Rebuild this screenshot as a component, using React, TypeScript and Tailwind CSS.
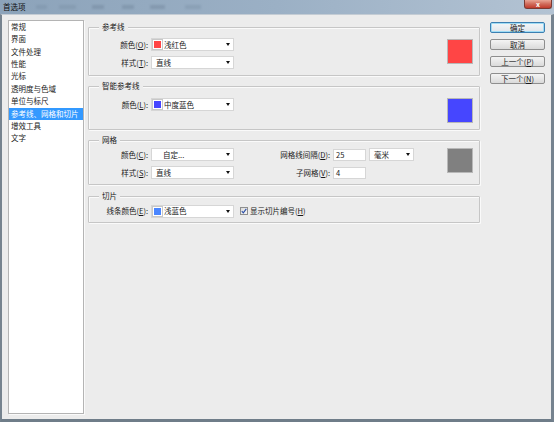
import React from "react";

const U = ({ children }: { children: React.ReactNode }) => (
  <span className="underline underline-offset-[1px] decoration-[0.5px]">{children}</span>
);

const Arrow = () => (
  <span className="ml-auto mr-[3px] w-0 h-0 border-l-[2.5px] border-r-[2.5px] border-t-[3px] border-l-transparent border-r-transparent border-t-[#111]" />
);

function Select({ swatch, text, w = "w-[83px]", indent }: { swatch?: string; text: string; w?: string; indent?: boolean }) {
  return (
    <div className={`${w} h-[13px] bg-white border border-[#d6d6d6] flex items-center`}>
      {swatch ? (
        <>
          <span className={`ml-[1px] w-[9px] h-[9px] border border-[#ffffff] outline outline-[0.5px] outline-[#c8c8c8] ${swatch}`} />
          <span className="ml-[2px]">{text}</span>
        </>
      ) : (
        <span className={indent ? "ml-[11px]" : "ml-[4px]"}>{text}</span>
      )}
      <Arrow />
    </div>
  );
}

function Input({ value }: { value: string }) {
  return (
    <div className="w-[33px] h-[12px] bg-white border border-[#d6d6d6] flex items-center pl-[2px]">{value}</div>
  );
}

function Label({ children, w = "w-[62px]" }: { children: React.ReactNode; w?: string }) {
  return <div className={`${w} text-right pr-[3px] whitespace-nowrap`}>{children}</div>;
}

function Group({ title, h, mt, children }: { title: string; h: string; mt: string; children: React.ReactNode }) {
  return (
    <div className={`relative ${h} ${mt} border border-[#c6c6c6] rounded-[1px] shadow-[inset_1px_1px_0_#fafafa,1px_1px_0_#fafafa]`}>
      <span className="absolute -top-[6px] left-[10px] px-[3px] bg-[#ececec] leading-[10px]">{title}</span>
      {children}
    </div>
  );
}

function Swatch({ color, mt }: { color: string; mt: string }) {
  return <div className={`ml-auto mr-[6px] ${mt} w-[26px] h-[25px] border border-[#b8b8b8] ${color}`} />;
}

function Btn({ children, primary }: { children: React.ReactNode; primary?: boolean }) {
  return (
    <div
      className={`w-[55px] h-[11px] rounded-[2px] flex items-center justify-center leading-[10px] border bg-gradient-to-b ${
        primary
          ? "border-[#3c7fb1] from-[#f4f6f8] to-[#dfe5ea] shadow-[inset_0_0_0_1px_#9fdcf5]"
          : "border-[#8e8e8e] from-[#f4f4f4] to-[#dadada]"
      }`}
    >
      {children}
    </div>
  );
}

const items = ["常规", "界面", "文件处理", "性能", "光标", "透明度与色域", "单位与标尺", "参考线、网格和切片", "增效工具", "文字"];

export default function App() {
  return (
    <div className="w-[554px] h-[422px] flex flex-col overflow-hidden bg-[#ececec] text-[7.5px] text-[#1a1a1a] font-['Noto_Sans_CJK_SC',sans-serif]">
      {/* title bar */}
      <div className="h-[14px] flex items-center bg-gradient-to-r from-[#8ca3ba] via-[#9bb0c5] to-[#b3c3d3] relative">
        <span className="ml-[3px] text-[#0e0e0e]">首选项</span>
        <div className="flex items-center gap-[12px] ml-[10px] opacity-30 blur-[1.2px]">
          <span className="w-[11px] h-[4px] bg-[#6f859b]" />
          <span className="w-[17px] h-[4px] bg-[#6f859b]" />
          <span className="ml-[4px] w-[12px] h-[4px] bg-[#5f7388]" />
          <span className="ml-[6px] w-[12px] h-[4px] bg-[#5f7388]" />
          <span className="ml-[4px] w-[15px] h-[4px] bg-[#5f7388]" />
          <span className="ml-[8px] w-[16px] h-[4px] bg-[#6f859b]" />
        </div>
        <div className="absolute right-[2px] top-0 w-[28px] h-[9px] rounded-b-[3px] border border-t-0 border-[#7a3a33] bg-gradient-to-b from-[#e8a595] via-[#d06a5a] to-[#c0392b] flex items-center justify-center text-white text-[7px] leading-none font-bold">
          x
        </div>
      </div>

      {/* body */}
      <div className="flex-1 flex items-start border-l-2 border-r-[3px] border-b-[3px] border-t border-l-[#76838f] border-r-[#76838f] border-b-[#6f7d89] border-t-[#c4ccd4] pl-[6px] pt-[5px]">
        {/* category list */}
        <div className="w-[76px] h-[394px] bg-white border border-[#b4b4b4] shadow-[1px_1px_0_#fafafa]">
          {items.map((t, i) => (
            <div
              key={t}
              className={`h-[12.37px] leading-[12.37px] pl-[2px] whitespace-nowrap ${i === 7 ? "bg-[#3399ff] text-white" : ""}`}
            >
              {t}
            </div>
          ))}
        </div>

        {/* panels */}
        <div className="ml-[4px] mt-[7px] w-[392px] flex flex-col">
          <Group title="参考线" h="h-[49px]" mt="mt-0">
            <div className="flex">
              <div className="flex flex-col gap-[5px] pt-[10px]">
                <div className="flex items-center h-[13px]">
                  <Label>颜色(<U>O</U>):</Label>
                  <Select swatch="bg-[#ff4545]" text="浅红色" />
                </div>
                <div className="flex items-center h-[13px]">
                  <Label>样式(<U>T</U>):</Label>
                  <Select text="直线" />
                </div>
              </div>
              <Swatch color="bg-[#ff4545]" mt="mt-[11px]" />
            </div>
          </Group>

          <Group title="智能参考线" h="h-[44px]" mt="mt-[10px]">
            <div className="flex">
              <div className="flex items-center h-[13px] mt-[11px]">
                <Label>颜色(<U>L</U>):</Label>
                <Select swatch="bg-[#4646ff]" text="中度蓝色" />
              </div>
              <Swatch color="bg-[#4646ff]" mt="mt-[11px]" />
            </div>
          </Group>

          <Group title="网格" h="h-[45px]" mt="mt-[10px]">
            <div className="flex">
              <div className="flex flex-col gap-[5px] pt-[7px]">
                <div className="flex items-center h-[13px]">
                  <Label>颜色(<U>C</U>):</Label>
                  <Select text="自定..." indent />
                  <Label w="w-[99px]">网格线间隔(<U>D</U>):</Label>
                  <Input value="25" />
                  <div className="ml-[3px]">
                    <Select text="毫米" w="w-[45px]" />
                  </div>
                </div>
                <div className="flex items-center h-[13px]">
                  <Label>样式(<U>S</U>):</Label>
                  <Select text="直线" />
                  <Label w="w-[99px]">子网格(<U>V</U>):</Label>
                  <Input value="4" />
                </div>
              </div>
              <Swatch color="bg-[#808080]" mt="mt-[7px]" />
            </div>
          </Group>

          <Group title="切片" h="h-[27px]" mt="mt-[11px]">
            <div className="flex items-center h-[12px] mt-[8px]">
              <Label>线条颜色(<U>E</U>):</Label>
              <Select swatch="bg-[#4a86ff]" text="浅蓝色" />
              <div className="ml-[6px] w-[8px] h-[8px] border border-[#8e8f8f] bg-gradient-to-br from-[#dcdcdc] to-[#f6f6f6] flex items-center justify-center">
                <svg width="6" height="6" viewBox="0 0 6 6">
                  <polyline points="0.8,3.2 2.3,4.8 5.3,0.8" fill="none" stroke="#2a4ea8" strokeWidth="1.1" />
                </svg>
              </div>
              <span className="ml-[2px]">显示切片编号(<U>H</U>)</span>
            </div>
          </Group>
        </div>

        {/* buttons */}
        <div className="ml-[10px] mt-[2px] flex flex-col gap-[6px]">
          <Btn primary>确定</Btn>
          <Btn>取消</Btn>
          <Btn>上一个(<U>P</U>)</Btn>
          <Btn>下一个(<U>N</U>)</Btn>
        </div>
      </div>
    </div>
  );
}
